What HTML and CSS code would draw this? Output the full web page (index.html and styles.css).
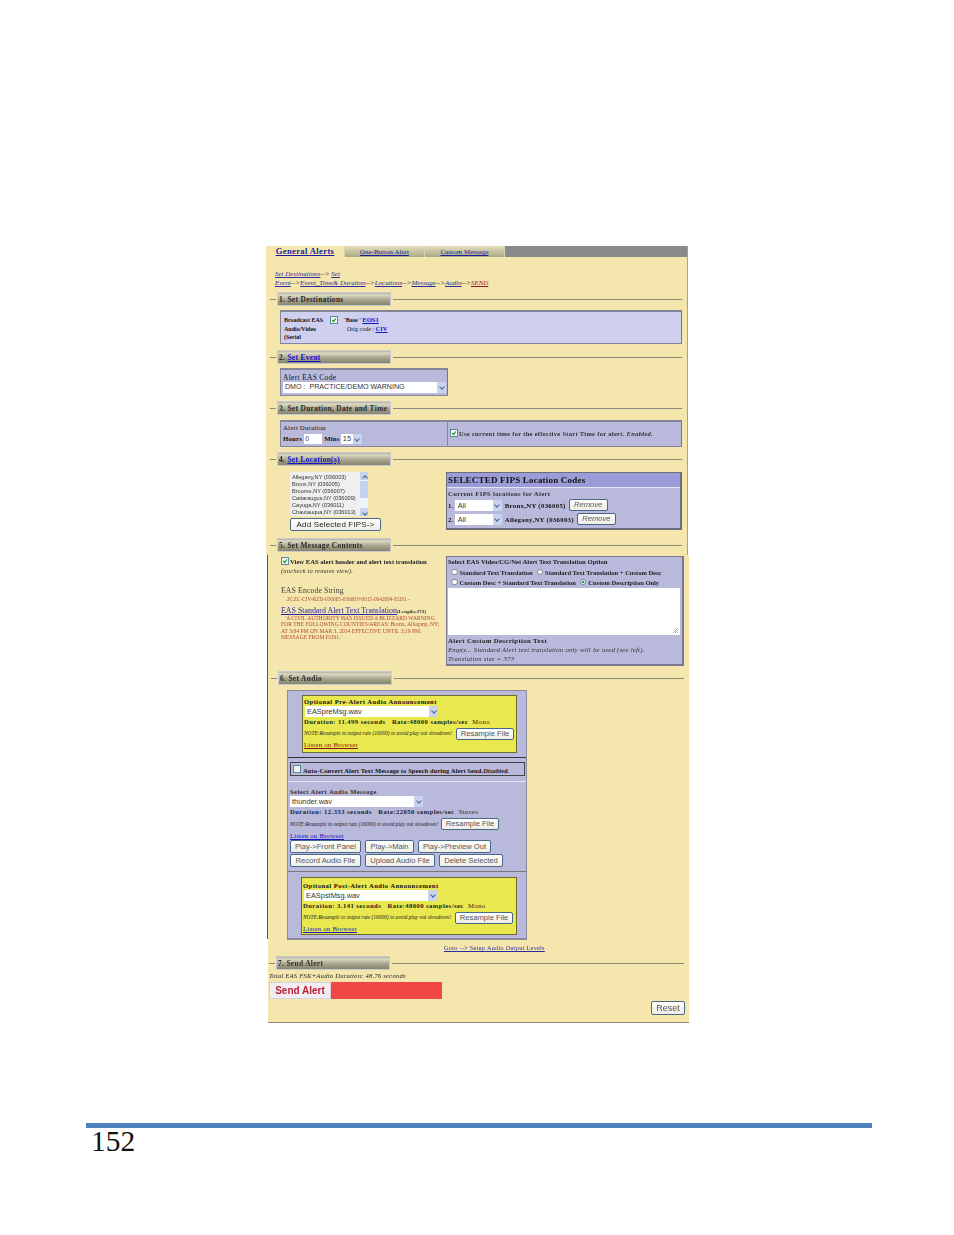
FILE: index.html
```html
<!DOCTYPE html>
<html lang="en">
<head>
<meta charset="utf-8">
<title>EAS General Alerts</title>
<link rel="stylesheet" href="styles.css">
</head>
<body>
<main class="doc">
  <div class="shot">
    <section class="slice slice-a">
      <nav class="tabs">
        <a class="tab tab-on">General Alerts</a>
        <a class="tab">One-Button Alert</a>
        <a class="tab">Custom Message</a>
        <span class="tab-rest"></span>
      </nav>
      <p class="crumbs"><a>Set Destinations</a>--&gt; <a>Set</a><br><a>Event</a>--&gt;<a>Event_Time&amp; Duration</a>--&gt;<a>Locations</a>--&gt;<a>Message</a>--&gt;<a>Audio</a>--&gt;<a class="send">SEND</a></p>

      <header class="head"><i class="dash"></i><h2 class="title">1. Set Destinations</h2><i class="rule"></i></header>
      <div class="box box-dest">
        <div class="dest-label">Broadcast EAS<br>Audio/Video<br>(Serial</div>
        <span class="check on"><svg viewBox="0 0 8 8"><path d="M1.5 4l2 2 3-4"/></svg></span>
        <div class="dest-info"><b>'Base '</b> <a class="blue">EOS1</a><br><span class="orig">Orig code : <a class="blue">CIV</a></span></div>
      </div>

      <header class="head h2"><i class="dash"></i><h2 class="title">2. <a class="blue">Set Event</a></h2><i class="rule"></i></header>
      <div class="box box-event">
        <div class="event-label">Alert EAS Code</div>
        <div class="select sel-event">DMO :&nbsp; PRACTICE/DEMO WARNING<i class="arrow"></i></div>
      </div>

      <header class="head h3"><i class="dash"></i><h2 class="title">3. Set Duration, Date and Time</h2><i class="rule"></i></header>
      <div class="box box-time">
        <div class="time-left">
          <div>Alert Duration</div>
          <div class="time-row"><b>Hours</b><span class="field">0</span><b class="mins">Mins</b><div class="select sel-mins">15<i class="arrow"></i></div></div>
        </div>
        <div class="time-right"><span class="check on"><svg viewBox="0 0 8 8"><path d="M1.5 4l2 2 3-4"/></svg></span><span>Use current time for the effective Start Time for alert. <b><em>Enabled.</em></b></span></div>
      </div>

      <header class="head h4"><i class="dash"></i><h2 class="title">4. <a class="blue">Set Location(s)</a></h2><i class="rule"></i></header>
      <div class="loc">
        <div class="loc-left">
          <div class="list">
            <div class="list-items">Allegany,NY (036003)<br>Bronx,NY (036005)<br>Broome,NY (036007)<br>Cattaraugus,NY (036009)<br>Cayuga,NY (036011)<br>Chautauqua,NY (036013)</div>
            <div class="scroll"><i class="arrow up"></i><i class="thumb"></i><i class="arrow"></i></div>
          </div>
          <button class="btn btn-add">Add Selected FIPS-&gt;</button>
        </div>
        <div class="fips">
          <h3 class="fips-head">SELECTED FIPS Location Codes</h3>
          <div class="fips-body">
            <div class="fips-cap">Current FIPS locations for Alert</div>
            <div class="fips-row"><b>1.</b><div class="select sel-all">All<i class="arrow"></i></div><b>Bronx,NY (036005)</b><button class="btn btn-rm">Remove</button></div>
            <div class="fips-row"><b>2.</b><div class="select sel-all">All<i class="arrow"></i></div><b>Allegany,NY (036003)</b><button class="btn btn-rm">Remove</button></div>
          </div>
        </div>
      </div>

      <header class="head h5"><i class="dash"></i><h2 class="title">5. Set Message Contents</h2><i class="rule"></i></header>
    </section>

    <section class="slice slice-b">
      <div class="msg">
        <div class="msg-left">
          <div class="view"><span class="check on"><svg viewBox="0 0 8 8"><path d="M1.5 4l2 2 3-4"/></svg></span><b>View EAS alert header and alert text translation</b></div>
          <div class="uncheck">(uncheck to remove view).</div>
          <div class="enc-head">EAS Encode String</div>
          <div class="enc">ZCZC-CIV-RZD-036005-036003+0015-0642004-EOS1 -</div>
          <div class="std-head"><a class="blue">EAS Standard Alert Text Translation</a><b class="len">(Length=373)</b></div>
          <div class="std">&nbsp;&nbsp;&nbsp;'A CIVIL AUTHORITY HAS ISSUED A BLIZZARD WARNING FOR THE FOLLOWING COUNTIES/AREAS: Bronx, Allegany, NY; AT 3:04 PM ON MAR 3, 2014 EFFECTIVE UNTIL 3:19 PM. MESSAGE FROM EOS1.'</div>
        </div>
        <div class="panel">
          <div class="panel-cap">Select EAS Video/CG/Net Alert Text Translation Option</div>
          <div class="radio-row"><i class="radio"></i><b>Standard Text Translation</b><i class="radio"></i><b>Standard Text Translation + Custom Desc</b></div>
          <div class="radio-row"><i class="radio"></i><b>Custom Desc + Standard Text Translation</b><i class="radio on"></i><b>Custom Description Only</b></div>
          <div class="area"><svg class="grip" viewBox="0 0 7 7"><path d="M6 1L1 6M6 3L3 6M6 5L5 6"/></svg></div>
          <div class="desc-head">Alert Custom Description Text</div>
          <div class="desc-note">Empty... Standard Alert text translation only will be used (see left).<br>Translation size = 373</div>
        </div>
      </div>

      <header class="head h6"><i class="dash"></i><h2 class="title">6. Set Audio</h2><i class="rule"></i></header>

      <div class="audio">
        <div class="yellow y-pre">
          <div class="y-head">Optional Pre-Alert Audio Announcement</div>
          <div class="select sel-wav">EASpreMsg.wav<i class="arrow"></i></div>
          <div class="dur"><b>Duration: 11.499 seconds &nbsp; Rate:48000 samples/sec</b> &nbsp;Mono</div>
          <div class="note-row"><em>NOTE:Resample to output rate (16000) to avoid play out slowdown!</em><button class="btn btn-res">Resample File</button></div>
          <a class="listen maroon">Listen on Browser</a>
        </div>
        <hr class="sep sep-dark">
        <div class="tts"><span class="check"></span><b>Auto-Convert Alert Text Message to Speech during Alert Send.<em>Disabled.</em></b></div>
        <hr class="sep sep-light">
        <div class="mid">
          <div class="mid-cap">Select Alert Audio Message</div>
          <div class="select sel-wav">thunder.wav<i class="arrow"></i></div>
          <div class="dur"><b>Duration: 12.353 seconds &nbsp; Rate:22050 samples/sec</b> &nbsp;Stereo</div>
          <div class="note-row"><em>NOTE:Resample to output rate (16000) to avoid play out slowdown!</em><button class="btn btn-res">Resample File</button></div>
          <a class="listen blue">Listen on Browser</a>
          <div class="btn-row"><button class="btn b71">Play-&gt;Front Panel</button><button class="btn b48">Play-&gt;Main</button><button class="btn b73">Play-&gt;Preview Out</button></div>
          <div class="btn-row"><button class="btn b71">Record Audio File</button><button class="btn b69">Upload Audio File</button><button class="btn b64">Delete Selected</button></div>
        </div>
        <hr class="sep sep-mid">
        <div class="yellow y-post">
          <div class="y-head">Optional Post-Alert Audio Announcement</div>
          <div class="select sel-wav">EASpstMsg.wav<i class="arrow"></i></div>
          <div class="dur"><b>Duration: 3.141 seconds &nbsp; Rate:48000 samples/sec</b> &nbsp;Mono</div>
          <div class="note-row"><em>NOTE:Resample to output rate (16000) to avoid play out slowdown!</em><button class="btn btn-res">Resample File</button></div>
          <a class="listen blue">Listen on Browser</a>
        </div>
      </div>
    </section>

    <section class="slice slice-c">
      <a class="goto blue">Goto --&gt; Setup Audio Output Levels</a>
      <header class="head h7"><i class="dash"></i><h2 class="title title-dim">7. Send Alert</h2><i class="rule"></i></header>
      <div class="total">Total EAS FSK+Audio Duration: 48.76 seconds</div>
      <div class="send-bar"><button class="send-btn">Send Alert</button></div>
      <div class="reset-row"><button class="btn btn-reset">Reset</button></div>
    </section>
  </div>

  <footer class="foot">
    <div class="foot-bar"></div>
    <div class="foot-num">152</div>
  </footer>
</main>
</body>
</html>
```

FILE: styles.css
```css
* { box-sizing: border-box; }
html, body { margin: 0; padding: 0; background: #fff; }
body { font-family: "Liberation Serif", serif; color: #111; }
a { text-decoration: underline; }
i { display: block; font-style: normal; }
.doc { width: 954px; height: 1235px; padding-top: 246px; overflow: hidden; }

/* embedded screenshot */
.shot { width: 424px; margin-left: 266px; height: 777px; filter: blur(0.3px); font-size: 7px; line-height: 9px; }
.slice { background: #f5e6ad; }
.slice-a { width: 422px; height: 309px; border-right: 1px solid #a8a28a; }
.slice-b { width: 422px; height: 384px; margin-left: 1px; border-left: 1px solid #555; }
.slice-c { width: 421px; height: 84px; margin-left: 2px; border-bottom: 1px solid #8a8a80; }

.tabs { display: flex; height: 11px; background: #8a8a8a; }
.tab { width: 80px; text-align: center; font-size: 6.8px; letter-spacing: .1px; line-height: 11px; color: #1a1a9c; background: linear-gradient(#e4dfb8, #a9a98c); border-right: 1px solid #d8d4b0; white-space: nowrap; }
.tab-on { width: 79px; font-size: 8.6px; letter-spacing: .35px; font-weight: bold; background: linear-gradient(#f5e6ad, #f5e6ad); }
.tab-rest { flex: 1; }
.crumbs { margin: 13px 0 4px 9px; font-size: 6.95px; line-height: 9px; font-style: italic; color: #333; height: 18px; }
.crumbs a { color: #2a2aa0; }
.crumbs .send { color: #a01030; }
.blue { color: #1414c8; }
.maroon { color: #8a1010; }

.head { display: flex; align-items: center; height: 14px; margin-left: 4px; }
.dash { width: 6px; height: 1px; background: #888; margin-right: 1px; }
.title { margin: 0; width: 114px; height: 14px; padding-left: 1px; font-size: 7.4px; line-height: 13px; font-weight: bold; color: #2a2a2a; letter-spacing: .34px; background: linear-gradient(#b5b29e, #dcd9c4 18%, #a9a78f 55%, #85846e); border: 1px solid #c9c9d2; white-space: nowrap; }
.title-dim { color: #333; }
.rule { flex: 1; height: 1px; background: #8a8a7c; margin: 0 5px 0 2px; }
.h2 { margin-top: 6px; }
.h3 { margin-top: 5px; }
.h4 { margin-top: 5px; }
.h5 { margin-top: 7px; }

.box { margin: 4px 0 0 14px; border: 1px solid #85859a; border-top-width: 2px; border-right-color: #777; background: #b9b9dc; }
.box-dest { width: 402px; height: 34px; background: #cfcff0; display: flex; padding: 4px 0 0 3px; font-size: 6px; line-height: 8.7px; font-weight: bold; }
.dest-label { width: 46px; }
.check { flex: none; display: inline-block; width: 8px; height: 8px; background: #f4f4f4; border: 1px solid #5a8a9a; }
.check svg { display: block; width: 6px; height: 6px; fill: none; stroke: #1f9a2a; stroke-width: 1.6; }
.dest-info { margin-left: 6px; font-size: 6px; font-weight: normal; line-height: 8.5px; }
.dest-info .blue { font-weight: bold; font-size: 6.6px; }
.orig { margin-left: 3px; }

.box-event { width: 168px; height: 28px; padding: 3px 0 0 2px; }
.event-label { font-size: 7.4px; letter-spacing: .35px; line-height: 9px; }
.select { position: relative; background: #fff; color: #333; font-family: "Liberation Sans", sans-serif; font-size: 7.4px; line-height: 11px; padding-left: 2px; white-space: nowrap; }
.arrow { position: absolute; right: 0; top: 0; bottom: 0; width: 9px; background: #c8d4ee; }
.arrow::after { content: ""; position: absolute; left: 2.5px; top: 3px; width: 3px; height: 3px; border: solid #44669a; border-width: 0 1.2px 1.2px 0; transform: rotate(45deg); }
.sel-event { width: 163px; height: 11px; font-size: 7.1px; }

.box-time { width: 402px; height: 27px; display: flex; margin-top: 5px; }
.time-left { width: 167px; padding: 1px 0 0 2px; border-right: 1px solid #85859a; font-size: 6.8px; letter-spacing: .2px; line-height: 9px; }
.time-row { display: flex; align-items: center; height: 11px; margin-top: 1px; }
.field { display: block; width: 18px; height: 10px; background: #fff; font-family: "Liberation Sans", sans-serif; color: #444; padding-left: 1px; margin-left: 2px; line-height: 10px; }
.mins { margin-left: 2px; }
.sel-mins { width: 21px; height: 10px; line-height: 10px; margin-left: 1px; padding-left: 2px; }
.time-right { flex: 1; display: flex; align-items: center; font-size: 6.5px; letter-spacing: .3px; padding: 0 0 2px 2px; font-weight: bold; color: #333; white-space: nowrap; }
.time-right .check { margin-right: 1px; }

.loc { display: flex; margin: 6px 0 0 0; height: 59px; }
.loc-left { width: 180px; padding-left: 24px; }
.list { display: flex; width: 78px; height: 44px; background: #efefef; }
.list-items { flex: 1; padding: 2px 0 0 2px; font-family: "Liberation Sans", sans-serif; font-size: 5.6px; line-height: 7px; color: #333; white-space: nowrap; overflow: hidden; }
.scroll { position: relative; width: 8px; background: #eef2fb; }
.scroll .arrow { left: 0; right: 0; top: auto; bottom: 0; width: 8px; height: 8px; }
.scroll .arrow.up { top: 0; bottom: auto; }
.scroll .arrow.up::after { transform: rotate(-135deg); top: 3.5px; }
.scroll .thumb { position: absolute; top: 9px; left: 0; width: 8px; height: 17px; background: #c3d2f2; }
.btn { display: block; padding: 0; margin: 0; background: linear-gradient(#fdfdfb, #efefe7); border: 1px solid #47688a; border-radius: 2px; color: #555; font-family: "Liberation Sans", sans-serif; font-size: 7.6px; line-height: 10px; white-space: nowrap; text-align: center; }
.btn-add { width: 91px; height: 13px; margin-top: 2px; font-size: 8px; color: #222; letter-spacing: .15px; }
.fips { width: 236px; height: 58px; border: 1px solid #6c6c7a; border-bottom-width: 2px; border-right-width: 2px; background: #b9b9dc; }
.fips-head { margin: 0; height: 14px; font-size: 9px; line-height: 14px; padding-left: 1px; background: #9b9bd8; letter-spacing: .2px; }
.fips-body { border-top: 1px solid #e2e2f2; padding: 1px 0 0 1px; font-size: 6.7px; letter-spacing: .3px; line-height: 9px; }
.fips-cap { font-weight: bold; color: #333; height: 9px; line-height: 10px; white-space: nowrap; }
.fips-row { display: flex; align-items: center; height: 14px; white-space: nowrap; }
.fips-row b { font-size: 6.8px; }
.sel-all { width: 47px; height: 11px; margin: 0 3px 0 1px; padding-left: 3px; letter-spacing: 0; }
.btn-rm { width: 39px; height: 12px; margin-left: 3px; font-style: italic; letter-spacing: 0; }

/* section five */
.msg { display: flex; height: 111px; }
.msg-left { width: 178px; padding: 1px 0 0 13px; }
.view { display: flex; align-items: center; gap: 1px; height: 10px; font-size: 6.63px; color: #222; white-space: nowrap; }
.uncheck { margin-top: 0; height: 9px; font-size: 6.6px; letter-spacing: .12px; font-style: italic; color: #333; white-space: nowrap; }
.enc-head { margin-top: 11px; font-size: 7.8px; line-height: 10px; color: #444; letter-spacing: .1px; white-space: nowrap; }
.enc { margin-left: 6px; font-size: 5.3px; line-height: 7px; color: #b04b38; white-space: nowrap; }
.std-head { margin-top: 2px; height: 11px; font-size: 7.9px; line-height: 11px; white-space: nowrap; }
.std-head .blue { color: #2a2aa0; }
.len { font-size: 5px; color: #333; }
.std { width: 160px; font-size: 5.6px; line-height: 6.4px; color: #b04b38; margin-top: -1px; }
.panel { width: 238px; height: 110px; margin-top: 1px; border: 1px solid #7a7a8c; border-width: 1px 2px 2px 1px; background: #b9b9dc; padding-left: 1px; color: #222; }
.panel-cap { font-size: 6.7px; line-height: 10px; font-weight: bold; white-space: nowrap; }
.radio-row { display: flex; align-items: center; height: 10px; padding-left: 3px; font-size: 6.5px; white-space: nowrap; }
.radio { flex: none; width: 6.5px; height: 6.5px; border-radius: 50%; background: #fdfdfd; border: 1px solid #7a8a9a; margin: 0 2px 0 4px; }
.radio:first-child { margin-left: 0; }
.radio.on { background: radial-gradient(circle, #2a9a4a 0 1.2px, #fff 1.6px); }
.area { position: relative; width: 232px; height: 47px; margin-top: 1px; background: #fff; }
.grip { position: absolute; right: 1px; bottom: 1px; width: 7px; height: 7px; fill: none; stroke: #999; stroke-width: .8; }
.desc-head { margin-top: 2px; font-size: 6.8px; line-height: 8px; font-weight: bold; letter-spacing: .35px; white-space: nowrap; }
.desc-note { font-size: 6.8px; letter-spacing: .22px; line-height: 9px; font-style: italic; color: #333; white-space: nowrap; }

/* audio */
.h6 { margin-top: 5px; margin-left: 3px; }
.audio { width: 240px; height: 250px; margin: 5px 0 0 19px; padding-top: 4px; background: #b9b9dc; border: 1px solid #8a8a98; border-width: 1px 1px 2px 1px; position: relative; }
.yellow { margin-left: 14px; width: 215px; background: #e9e84f; border: 1px solid #6b6b30; padding: 1px 0 0 1px; }
.y-pre { height: 58px; }
.y-post { height: 58px; margin: 5px 0 0 13px; width: 216px; padding-top: 3px; }
.y-head { font-size: 6.6px; line-height: 9px; font-weight: bold; letter-spacing: .46px; white-space: nowrap; }
.sel-wav { width: 133px; height: 11px; margin-left: 1px; }
.dur { font-size: 6.6px; line-height: 8.5px; letter-spacing: .46px; color: #222; white-space: nowrap; }
.yellow .dur { margin-top: 1px; }
.note-row { display: flex; align-items: center; height: 13px; margin-top: 1px; font-size: 5.4px; color: #222; white-space: nowrap; }
.yellow .note-row { height: 12px; }
.btn-res { width: 58px; height: 12px; margin-left: 3px; }
.yellow .btn-res { margin-left: 4px; }
.listen { display: block; font-size: 6.8px; line-height: 9px; letter-spacing: .22px; }
.sep { margin: 0; border: 0; height: 1px; }
.sep-dark { margin-top: 4px; background: #333; }
.sep-light { margin-top: 5px; background: #e4e4f2; }
.sep-mid { margin-top: 0; background: #777; }
.tts { display: flex; align-items: center; width: 235px; height: 14px; margin: 4px 0 0 2px; border: 1px solid #444; padding: 2px 0 0 2px; gap: 2px; font-size: 6.5px; letter-spacing: .1px; white-space: nowrap; }
.tts .check { margin-top: -3px; }
.mid { height: 89px; padding: 5px 0 0 2px; }
.mid-cap { font-size: 6.6px; line-height: 9px; font-weight: bold; letter-spacing: .4px; color: #333; }
.mid .sel-wav { margin-left: 0; }
.mid .dur { margin-top: 1px; }
.btn-row { display: flex; gap: 4px; height: 14px; align-items: center; }
.btn-row .btn { height: 13px; }
.b71 { width: 71px; }
.b48 { width: 49px; }
.b73 { width: 73px; }
.b69 { width: 70px; }
.b64 { width: 64px; }

/* send */
.goto { display: block; margin-left: 176px; padding-top: 4px; height: 15px; font-size: 6.2px; line-height: 9px; letter-spacing: .3px; color: #2a2aa0; white-space: nowrap; }
.h7 { margin: 2px 0 0 1px; }
.total { margin: 1px 0 0 1px; height: 10px; font-size: 6.6px; letter-spacing: .23px; line-height: 10px; font-style: italic; color: #222; white-space: nowrap; }
.send-bar { width: 173px; height: 17px; margin: 1px 0 0 1px; background: #f04646; }
.send-btn { display: block; width: 62px; height: 17px; padding: 0; background: #f2ecf4; border: 1px solid #d8d0d8; color: #b81e34; font-family: "Liberation Sans", sans-serif; font-weight: bold; font-size: 10px; line-height: 15px; }
.reset-row { display: flex; justify-content: flex-end; padding: 2px 4px 0 0; }
.btn-reset { width: 34px; height: 14px; font-size: 9px; }

/* page footer */
.foot { margin: 100px 0 0 86px; width: 786px; }
.foot-bar { height: 5px; background: #4f81bd; }
.foot-num { padding-left: 5px; font-size: 29.4px; line-height: 26px; color: #111; }
```
